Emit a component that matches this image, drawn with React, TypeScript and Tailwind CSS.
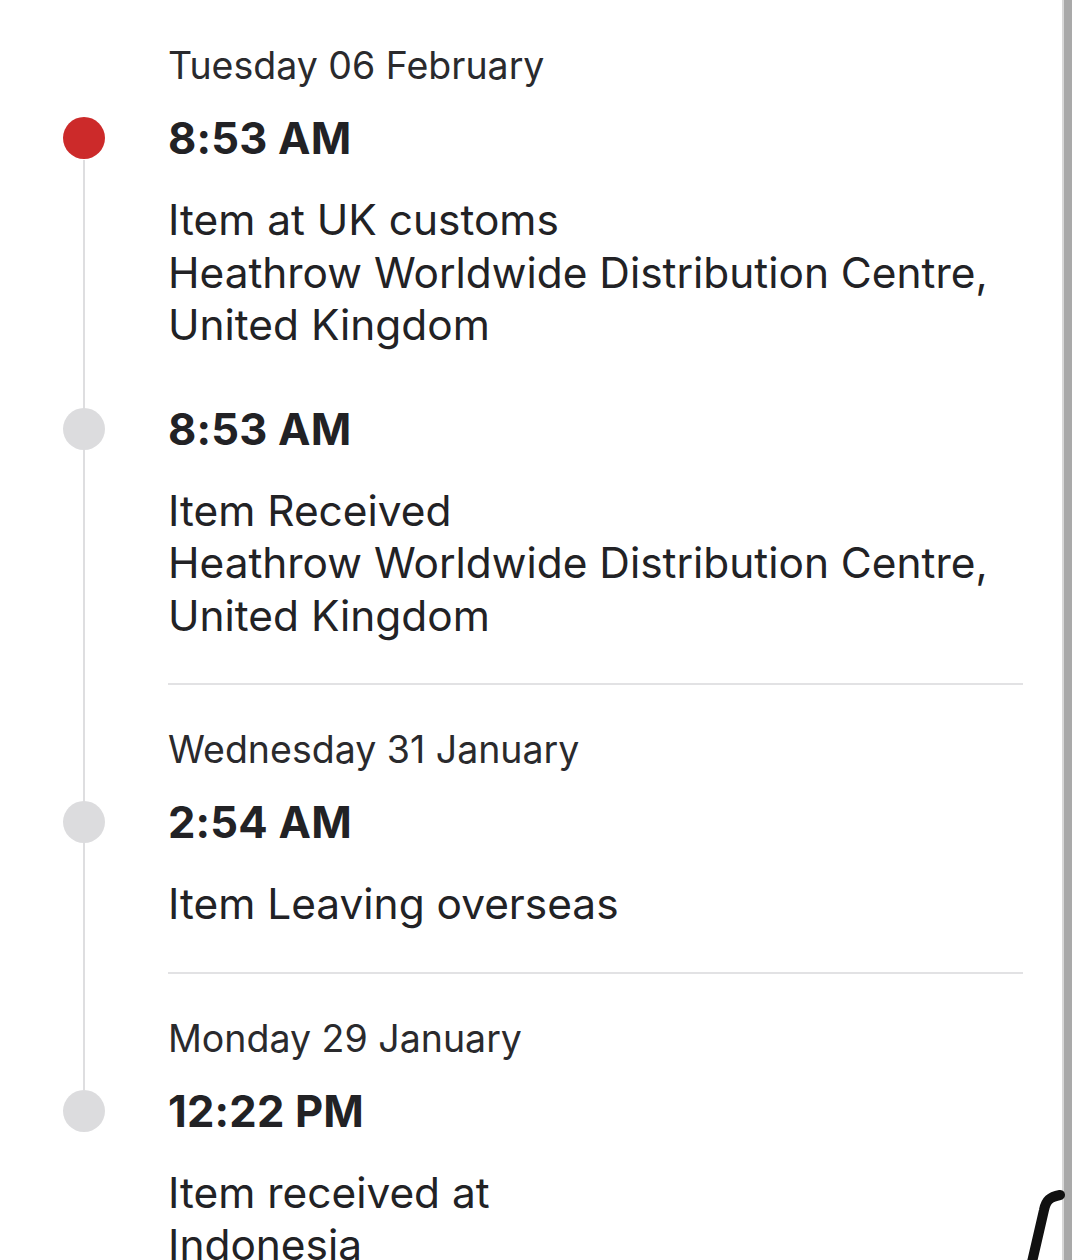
import React from 'react';

type Entry = {
  time: string;
  lines: string[];
  active?: boolean;
};

type Group = {
  date: string;
  entries: Entry[];
};

const groups: Group[] = [
  {
    date: 'Tuesday 06 February',
    entries: [
      {
        time: '8:53 AM',
        active: true,
        lines: ['Item at UK customs', 'Heathrow Worldwide Distribution Centre,', 'United Kingdom'],
      },
      {
        time: '8:53 AM',
        lines: ['Item Received', 'Heathrow Worldwide Distribution Centre,', 'United Kingdom'],
      },
    ],
  },
  {
    date: 'Wednesday 31 January',
    entries: [{ time: '2:54 AM', lines: ['Item Leaving overseas'] }],
  },
  {
    date: 'Monday 29 January',
    entries: [{ time: '12:22 PM', lines: ['Item received at', 'Indonesia'] }],
  },
];

function TimelineEntry({ entry, first }: { entry: Entry; first: boolean }) {
  return (
    <div className={first ? 'flex' : 'flex mt-[51px]'}>
      <div className="w-[168px] shrink-0 flex justify-start pl-[63px]">
        <div
          className={
            'relative z-10 mt-[5px] w-[42px] h-[42px] rounded-full ' +
            (entry.active ? 'bg-[#cc2a2a]' : 'bg-[#dcdcde]')
          }
        />
      </div>
      <div className="flex-1">
        <div className="text-[43.5px] leading-[52px] font-bold text-[#222225] tracking-[0.2px]">{entry.time}</div>
        <div className="mt-[30px] text-[42.4px] leading-[52.5px] text-[#222225]">
          {entry.lines.map((l, i) => (
            <div key={i}>{l}</div>
          ))}
        </div>
      </div>
    </div>
  );
}

export default function App() {
  return (
    <div
      className="relative w-[1080px] h-[1260px] overflow-hidden bg-white flex"
      style={{ fontFamily: 'Inter, "Noto Sans", "Liberation Sans", sans-serif' }}
    >
      <div className="relative flex-1">
        {/* timeline rail */}
        <div className="absolute left-[83px] top-[160px] h-[930px] w-[2px] bg-[#dedee0]" />

        <div className="pt-[46px]">
          {groups.map((g, gi) => (
            <div key={gi}>
              {gi > 0 && (
                <div className="ml-[168px] mr-[39px] h-[2px] bg-[#e2e2e4] mt-[41px] mb-[45px]" />
              )}
              <div className="pl-[168px] text-[37.5px] leading-[40px] text-[#2a2a2d]">{g.date}</div>
              <div className="mt-[26px]">
                {g.entries.map((e, ei) => (
                  <TimelineEntry key={ei} entry={e} first={ei === 0} />
                ))}
              </div>
            </div>
          ))}
        </div>
      </div>

      {/* screen edge */}
      <div className="w-[2px] h-full bg-[#d8d8d8]" />
      <div className="w-[8px] h-full bg-[#a9a9a9]" />
      <div className="w-[8px] h-full bg-white" />

      {/* pen mark */}
      <svg className="absolute left-[1020px] top-[1180px]" width="60" height="80" viewBox="0 0 60 80">
        <path
          d="M12 82 L24 30 C26 20 30 17 40 15"
          fill="none"
          stroke="#111"
          strokeWidth="10"
          strokeLinecap="round"
        />
      </svg>
    </div>
  );
}
